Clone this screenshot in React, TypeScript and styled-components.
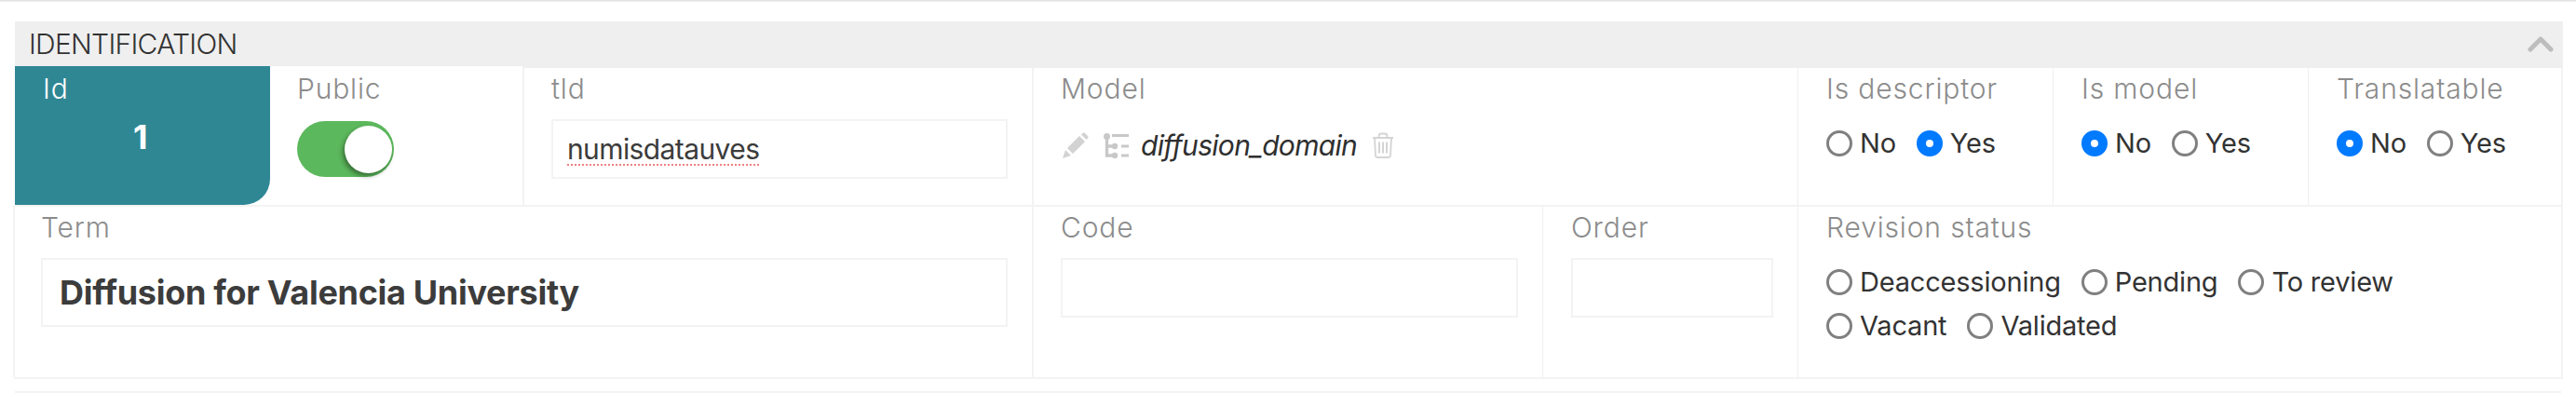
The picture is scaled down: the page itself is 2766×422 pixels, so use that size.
import React from "react";
import styled, { createGlobalStyle } from "styled-components";

const Global = createGlobalStyle`
  html, body { margin: 0; padding: 0; background: #fff; }
  body { width: 2766px; height: 422px; overflow: hidden; font-family: Inter, "Liberation Sans", sans-serif; }
`;

const Page = styled.div`
  height: 422px;
  box-sizing: border-box;
  display: flex;
  flex-direction: column;
  overflow: hidden;
`;
const TopEdge = styled.div`
  flex: none;
  height: 2px;
  background: linear-gradient(#dedede, #f4f4f4);
`;
const Section = styled.section`
  margin: 21px 14px 0;
  display: flex;
  flex-direction: column;
`;
const Header = styled.header`
  height: 50px;
  box-sizing: border-box;
  margin-left: 2px;
  background: #efefef;
  display: flex;
  align-items: center;
  justify-content: space-between;
  padding: 0 10px 2px 15px;
  color: #333;
  font-size: 30px;
  font-weight: 300;
  letter-spacing: -0.75px;
`;
const Body = styled.div`
  display: flex;
  flex-direction: column;
  border-left: 2px solid transparent;
  border-right: 2px solid #f3f3f3;
  border-bottom: 2px solid #f3f3f3;
`;
const Label = styled.div`
  margin-top: 5px;
  height: 34px;
  line-height: 34px;
  font-size: 30px;
  font-weight: 300;
  letter-spacing: 0.85px;
  color: #8c8c8c;
  white-space: nowrap;
`;
const Row = styled.div<{ $h: number }>`
  display: flex;
  box-sizing: border-box;
  height: ${(p) => p.$h}px;
  & + & {
    margin-left: -2px;
    border-left: 2px solid #f3f3f3;
    border-top: 2px solid #f3f3f3;
  }
  & + & ${Label} { margin-top: 6px; }
`;
const Cell = styled.div<{ $w?: number; $thin?: boolean; $left?: number }>`
  box-sizing: border-box;
  width: ${(p) => (p.$w ? `${p.$w}px` : "auto")};
  flex: ${(p) => (p.$w ? "none" : "1")};
  padding: 0 26px 0 ${(p) => p.$left ?? (p.$thin ? 30 : 29)}px;
  border-left: ${(p) => (p.$thin ? "1px solid #efefef" : "2px solid #f3f3f3")};
  &:first-child { border-left: 0; }
`;
const IdCell = styled.div`
  box-sizing: border-box;
  width: 274px;
  margin-top: -2px;
  padding: 2px 0 0 30px;
  background: #2f8794;
  border-bottom-right-radius: 28px;
  color: #fff;
`;
const PublicCell = styled.div`
  box-sizing: border-box;
  width: 271px;
  margin-top: -2px;
  padding: 2px 0 0 29px;
  background: #fff;
`;
const IdLabel = styled(Label)`
  color: #fff;
`;
const IdValue = styled.div`
  margin: 15px 0 0 97px;
  font-size: 36px;
  font-weight: 700;
  line-height: 40px;
`;
const Toggle = styled.div`
  margin-top: 18px;
  width: 104px;
  height: 60px;
  border-radius: 30px;
  background: #5cb85c;
  display: flex;
  justify-content: flex-end;
  align-items: flex-start;
  padding: 5px 2px 0 0;
  box-sizing: border-box;
`;
const Knob = styled.div`
  width: 51px;
  height: 51px;
  border-radius: 50%;
  background: #fff;
  box-shadow: -2px 3px 5px rgba(0, 0, 0, 0.4);
`;
const Input = styled.div<{ $h: number; $bold?: boolean }>`
  box-sizing: border-box;
  height: ${(p) => p.$h}px;
  border: 2px solid #f3f3f3;
  display: flex;
  align-items: center;
  padding-left: ${(p) => (p.$bold ? 18 : 15)}px;
  margin-top: 16px;
  color: #3c3c3c;
  font-size: ${(p) => (p.$bold ? 36 : 30)}px;
  font-weight: ${(p) => (p.$bold ? 700 : 400)};
  letter-spacing: ${(p) => (p.$bold ? -0.3 : -0.6)}px;
`;
const Spell = styled.span`
  text-decoration: underline dotted #f08080 2px;
  text-underline-offset: 5px;
`;
const ModelRow = styled.div`
  display: flex;
  align-items: center;
  margin-top: 22px;
  height: 44px;
  padding-left: 2px;
`;
const ModelName = styled.span`
  font-size: 30px;
  font-style: italic;
  color: #2f2f2f;
  margin: 0 16px 0 13px;
  letter-spacing: -0.7px;
`;
const Radios = styled.div`
  display: flex;
  flex-wrap: wrap;
  gap: 19px 22px;
  margin-top: 28px;
  max-width: 660px;
`;
const Radio = styled.label`
  display: inline-flex;
  align-items: center;
  gap: 8px;
  font-size: 29px;
  line-height: 28px;
  color: #333;
  letter-spacing: -0.2px;
`;
const Dot = styled.span<{ $on?: boolean }>`
  box-sizing: border-box;
  width: 28px;
  height: 28px;
  border-radius: 50%;
  border: ${(p) => (p.$on ? "10px solid #007aff" : "3px solid #808080")};
  background: #fff;
`;
const NextSection = styled.div`
  flex: none;
  height: 2px;
  margin: 13px 16px 0;
  background: #f3f3f3;
`;
const Icon = styled.svg<{ $ml?: number }>`
  flex: none;
  margin-left: ${(p) => p.$ml ?? 0}px;
`;

const R = ({ t, on }: { t: string; on?: boolean }) => (
  <Radio><Dot $on={on} />{t}</Radio>
);

export default function App() {
  return (
    <>
      <Global />
      <Page>
        <TopEdge />
        <Section>
          <Header>
            <span>IDENTIFICATION</span>
            <Icon width="28" height="18" viewBox="0 0 28 18">
              <path d="M3 15 L14 4 L25 15" fill="none" stroke="#bdbdbd" strokeWidth="5" strokeLinecap="round" strokeLinejoin="round" />
            </Icon>
          </Header>
          <Body>
            <Row $h={147}>
              <IdCell>
                <IdLabel>Id</IdLabel>
                <IdValue>1</IdValue>
              </IdCell>
              <PublicCell>
                <Label>Public</Label>
                <Toggle><Knob /></Toggle>
              </PublicCell>
              <Cell $w={547}>
                <Label>tld</Label>
                <Input $h={64}><Spell>numisdatauves</Spell></Input>
              </Cell>
              <Cell $w={822}>
                <Label>Model</Label>
                <ModelRow>
                  <Icon width="28" height="28" viewBox="0 0 28 28">
                    <path d="M0 28 L3 19 L9 25 Z M5 17 L18 4 L24 10 L11 23 Z M20 2.5 L22 .5 Q23 0 24 1 L27 4 Q28 5 27.4 6 L25.5 8 Z" fill="#d2d2d2" />
                  </Icon>
                  <Icon $ml={16} width="27" height="27" viewBox="0 0 27 27">
                    <path d="M3.5 3 V24 H10 M3.5 14 H10" fill="none" stroke="#c8c8c8" strokeWidth="3.4" />
                    <circle cx="3.5" cy="3.5" r="3.5" fill="#c8c8c8" />
                    <circle cx="12" cy="14" r="3.2" fill="#c8c8c8" />
                    <circle cx="12" cy="24" r="3.2" fill="#c8c8c8" />
                    <path d="M9 2.5 H27 M19 14 H27 M19 24 H27" fill="none" stroke="#c8c8c8" strokeWidth="2.8" />
                  </Icon>
                  <ModelName>diffusion_domain</ModelName>
                  <Icon width="24" height="28" viewBox="0 0 24 28">
                    <path d="M1 6 H23 M7.5 6 V4 Q7.5 1.5 10 1.5 H14 Q16.5 1.5 16.5 4 V6 M3 6 L4 25 Q4.2 27 6 27 H18 Q19.8 27 20 25 L21 6" fill="none" stroke="#d4d4d4" strokeWidth="1.8" />
                    <path d="M8 10.5 V22.5 M12 10.5 V22.5 M16 10.5 V22.5" fill="none" stroke="#d4d4d4" strokeWidth="2" />
                  </Icon>
                </ModelRow>
              </Cell>
              <Cell $w={274} $thin>
                <Label>Is descriptor</Label>
                <Radios><R t="No" /><R t="Yes" on /></Radios>
              </Cell>
              <Cell $w={274} $thin>
                <Label>Is model</Label>
                <Radios><R t="No" on /><R t="Yes" /></Radios>
              </Cell>
              <Cell $thin>
                <Label>Translatable</Label>
                <Radios><R t="No" on /><R t="Yes" /></Radios>
              </Cell>
            </Row>
            <Row $h={185}>
              <Cell $w={1092} $left={28}>
                <Label>Term</Label>
                <Input $h={74} $bold>Diffusion for Valencia University</Input>
              </Cell>
              <Cell $w={548}>
                <Label>Code</Label>
                <Input $h={64} />
              </Cell>
              <Cell $w={274} $thin>
                <Label>Order</Label>
                <Input $h={64} />
              </Cell>
              <Cell $thin>
                <Label>Revision status</Label>
                <Radios>
                  <R t="Deaccessioning" />
                  <R t="Pending" />
                  <R t="To review" />
                  <R t="Vacant" />
                  <R t="Validated" />
                </Radios>
              </Cell>
            </Row>
          </Body>
        </Section>
        <NextSection />
      </Page>
    </>
  );
}
